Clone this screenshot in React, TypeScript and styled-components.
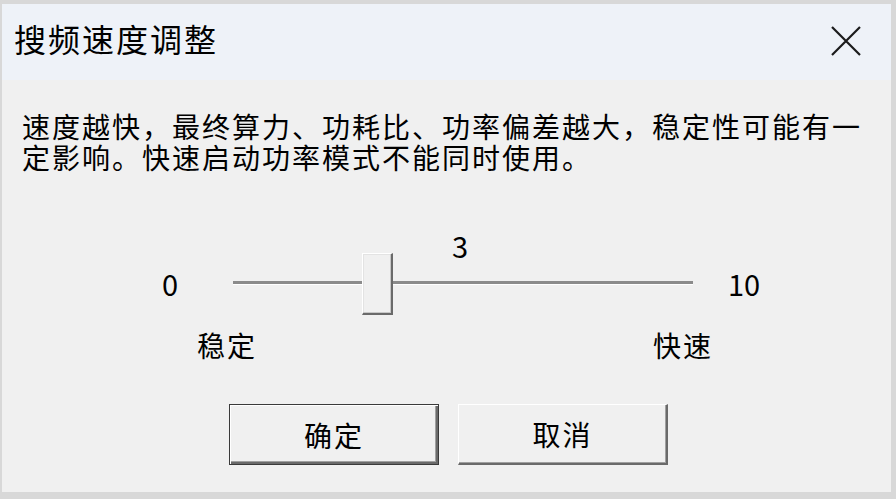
import React, {useState} from 'react'
import styled, {createGlobalStyle} from 'styled-components'

const MIN = 0
const MAX = 10
const TRACK_WIDTH = 460
const THUMB_WIDTH = 31

export default function App() {
    const [value] = useState<number>(3)
    const thumbLeft = ((value - MIN) / (MAX - MIN)) * (TRACK_WIDTH - THUMB_WIDTH)

    return (
        <>
            <GlobalStyle />
            <Window>
                <TitleBar>
                    <TitleText>搜频速度调整</TitleText>
                    <CloseButton type="button" aria-label="close">
                        <svg width="32" height="32" viewBox="0 0 32 32">
                            <path d="M2 2 L30 30 M30 2 L2 30" stroke="#1b1b1b" strokeWidth="2.2" fill="none" />
                        </svg>
                    </CloseButton>
                </TitleBar>
                <Body>
                    <Description>
                        速度越快，最终算力、功耗比、功率偏差越大，稳定性可能有一定影响。快速启动功率模式不能同时使用。
                    </Description>

                    <SliderGrid>
                        <ValueText>{value}</ValueText>

                        <EndText $col={1}>{MIN}</EndText>
                        <TrackCell>
                            <Channel />
                            <Thumb style={{left: thumbLeft}} />
                        </TrackCell>
                        <EndText $col={3}>{MAX}</EndText>

                        <HintRow>
                            <HintText>稳定</HintText>
                            <HintText>快速</HintText>
                        </HintRow>
                    </SliderGrid>

                    <ButtonRow>
                        <DialogButton type="button" $primary>确定</DialogButton>
                        <DialogButton type="button">取消</DialogButton>
                    </ButtonRow>
                </Body>
            </Window>
        </>
    )
}

const GlobalStyle = createGlobalStyle`
  html, body {
    margin: 0;
    padding: 0;
    height: 100%;
    background: #d8d8d8;
    font-family: "Noto Sans CJK SC", "Noto Sans", sans-serif;
    color: #000;
  }
  #root {
    height: 100%;
  }
`

const Window = styled.div`
  box-sizing: border-box;
  margin: 4px 5px 0 2px;
  height: calc(100vh - 11px);
  display: flex;
  flex-direction: column;
  background: #f0f0f0;
`

const TitleBar = styled.div`
  height: 76px;
  flex-shrink: 0;
  background: #eef2f8;
  display: flex;
  justify-content: space-between;
  align-items: flex-start;
  padding: 0 29px 0 12px;
`

const TitleText = styled.div`
  margin-top: 16px;
  font-size: 32px;
  line-height: 36px;
  letter-spacing: 2px;
`

const CloseButton = styled.button`
  margin-top: 21px;
  padding: 0;
  border: none;
  background: transparent;
  width: 32px;
  height: 32px;
  display: flex;
`

const Body = styled.div`
  flex: 1;
  display: flex;
  flex-direction: column;
  padding: 0 20px;
`

const Description = styled.p`
  margin: 31px 0 0;
  font-size: 28px;
  line-height: 31px;
  letter-spacing: 2px;
`

const SliderGrid = styled.div`
  margin: 57px 0 0 128px;
  display: grid;
  grid-template-columns: 40px ${TRACK_WIDTH + 74}px 40px;
  grid-template-rows: 30px 46px auto;
  align-items: center;
`

const ValueText = styled.div`
  grid-column: 2;
  grid-row: 1;
  margin: 0 37px 0 43px;
  text-align: center;
  font-size: 29px;
  line-height: 30px;
`

const EndText = styled.div<{ $col: number }>`
  grid-column: ${({ $col }) => $col};
  grid-row: 2;
  font-size: 29px;
  line-height: 46px;
  text-align: center;
`

const TrackCell = styled.div`
  grid-column: 2;
  grid-row: 2;
  position: relative;
  height: 46px;
  margin: 0 31px 0 43px;
  display: flex;
  align-items: center;
`

const Channel = styled.div`
  width: 100%;
  height: 3px;
  background: #8b8b8b;
  border-bottom: 1px solid #ffffff;
`

const Thumb = styled.div`
  position: absolute;
  top: 50%;
  transform: translateY(-50%);
  margin-top: 1px;
  box-sizing: border-box;
  width: ${THUMB_WIDTH}px;
  height: 62px;
  background: #f0f0f0;
  border-top: 1px solid #ffffff;
  border-left: 1px solid #ffffff;
  border-right: 2px solid #6a6a6a;
  border-bottom: 2px solid #6a6a6a;
  box-shadow: inset -1px -1px 0 #c8c8c8, inset 1px 1px 0 #e3e3e3;
`

const HintRow = styled.div`
  grid-column: 2;
  grid-row: 3;
  margin: 24px 11px 0 7px;
  display: flex;
  justify-content: space-between;
`

const HintText = styled.span`
  font-size: 28px;
  line-height: 30px;
  letter-spacing: 2px;
`

const ButtonRow = styled.div`
  margin-top: 44px;
  padding-left: 4px;
  display: flex;
  justify-content: center;
  gap: 19px;
`

const DialogButton = styled.button<{ $primary?: boolean }>`
  box-sizing: border-box;
  width: 210px;
  height: 61px;
  padding: 0;
  background: #f0f0f0;
  font-family: "Noto Sans CJK SC", sans-serif;
  font-size: 28px;
  letter-spacing: 2px;
  color: #000;
  border-style: solid;
  border-width: 1px 2px 2px 1px;
  border-color: #ffffff #6a6a6a #6a6a6a #ffffff;
  box-shadow: inset -1px -1px 0 #a0a0a0;
  ${({ $primary }) => $primary
    ? `border: 1px solid #3a3a3a; box-shadow: inset 1px 1px 0 #ffffff, inset -2px -2px 0 #6a6a6a, inset -3px -3px 0 #a0a0a0;`
    : ''}
`
